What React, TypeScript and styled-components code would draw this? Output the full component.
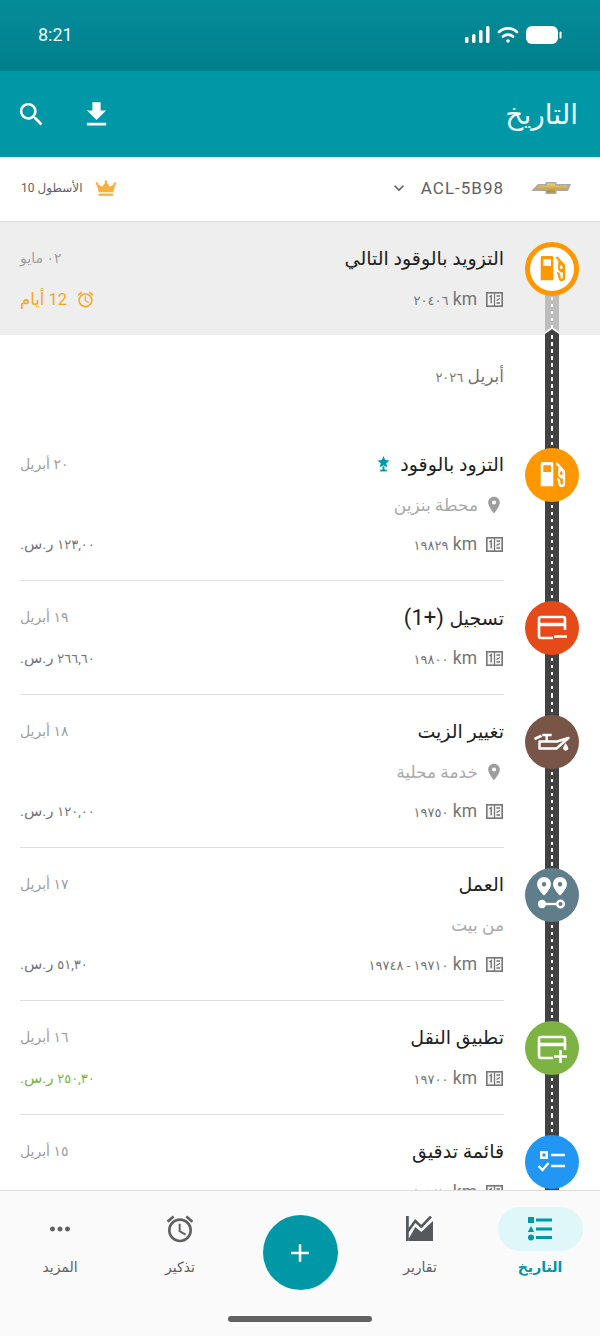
import React from 'react';
import styled, { createGlobalStyle } from 'styled-components';
import {
  MdAdd,
  MdAlarm,
  MdFileDownload,
  MdKeyboardArrowDown,
  MdMoreHoriz,
  MdPlace,
  MdSearch,
} from 'react-icons/md';

const teal = '#0097a7';

const GlobalStyle = createGlobalStyle`
  *, *::before, *::after {
    box-sizing: border-box;
  }
  html, body {
    margin: 0;
    padding: 0;
    background: #fff;
  }
  body {
    font-family: Roboto, "Noto Sans", "DejaVu Sans", sans-serif;
  }
`;

const Screen = styled.div`
  display: flex;
  flex-direction: column;
  width: 600px;
  height: 1336px;
  overflow: hidden;
  direction: rtl;
`;

const StatusBar = styled.div`
  display: flex;
  flex: 0 0 71px;
  align-items: center;
  justify-content: space-between;
  padding: 0 38px 2px;
  color: #eef8f9;
  font-size: 18px;
  background: linear-gradient(#058c99, #007f8c);
  direction: ltr;
`;

const StatusIcons = styled.div`
  display: flex;
  align-items: center;
  gap: 7px;
`;

const AppBar = styled.header`
  display: flex;
  flex: 0 0 86px;
  align-items: center;
  justify-content: space-between;
  padding: 0 22px 0 16px;
  color: #fff;
  background: ${teal};
`;

const AppTitle = styled.h1`
  margin: 0;
  color: #f2fbfc;
  font-size: 28px;
  font-weight: 400;
`;

const AppActions = styled.div`
  display: flex;
  align-items: center;
  gap: 33px;
  direction: ltr;
`;

const VehicleBar = styled.div`
  display: flex;
  flex: 0 0 65px;
  align-items: center;
  justify-content: space-between;
  padding: 0 21px 2px;
  background: #fff;
  border-bottom: 1px solid #dcdcdc;
`;

const VehiclePicker = styled.div`
  display: flex;
  align-items: center;
  padding-right: 7px;
  color: #616161;
  font-size: 17px;
`;

const Plate = styled.span`
  margin: 0 26px 0 12px;
  letter-spacing: 1px;
  direction: ltr;
`;

const Fleet = styled.div`
  display: flex;
  align-items: center;
  gap: 13px;
  color: #616161;
  font-size: 12px;
`;

const List = styled.main`
  flex: 1;
  min-height: 0;
  overflow: hidden;
`;

const Row = styled.section<{ $next?: boolean }>`
  display: flex;
  background: ${(p) => (p.$next ? '#eeeeee' : '#fff')};
`;

const Rail = styled.div`
  position: relative;
  display: flex;
  flex: 0 0 96px;
  justify-content: center;
  padding-top: 20px;
`;

const Road = styled.div<{ $light?: boolean }>`
  position: absolute;
  top: ${(p) => (p.$light ? '47px' : '0')};
  bottom: 0;
  left: 41px;
  width: 14px;
  background: ${(p) => (p.$light ? '#bdbdbd' : '#424242')};

  &::after {
    content: '';
    position: absolute;
    top: 0;
    bottom: 0;
    left: 6px;
    width: 2px;
    background: repeating-linear-gradient(#fff 0 3.5px, transparent 3.5px 7px);
  }
`;

const RoadCap = styled.svg`
  position: absolute;
  top: -8px;
  left: 41px;
  z-index: 1;
`;

const Stop = styled.div<{ $color: string; $outlined?: boolean }>`
  position: relative;
  z-index: 1;
  display: flex;
  align-items: center;
  justify-content: center;
  width: 54px;
  height: 54px;
  color: ${(p) => (p.$outlined ? p.$color : '#fff')};
  background: ${(p) => (p.$outlined ? '#fff' : p.$color)};
  border: ${(p) => (p.$outlined ? `5px solid ${p.$color}` : 'none')};
  border-radius: 50%;
`;

const Body = styled.div<{ $divided?: boolean }>`
  flex: 1;
  min-width: 0;
  margin-left: 20px;
  padding: 23px 0;
  border-bottom: ${(p) => (p.$divided ? '1px solid #dedede' : 'none')};
`;

const TitleLine = styled.div`
  display: flex;
  align-items: center;
  justify-content: space-between;
  height: 26px;
  margin-bottom: 15px;
`;

const Title = styled.div`
  display: flex;
  align-items: center;
  gap: 10px;
  color: #212121;
  font-size: 19px;
`;

const Count = styled.span`
  font-size: 22px;
`;

const DateText = styled.div`
  color: #9e9e9e;
  font-size: 14px;
`;

const MetaLine = styled.div`
  display: flex;
  align-items: center;
  justify-content: space-between;
  height: 26px;
  margin-top: 13px;
`;

const Place = styled.div`
  display: flex;
  align-items: center;
  gap: 6px;
  color: #aaaaaa;
  font-size: 17px;
`;

const Odometer = styled.div`
  display: flex;
  align-items: center;
  gap: 9px;
  padding-right: 1px;
  color: #757575;
  font-size: 17.5px;
`;

const Digits = styled.span`
  font-size: 13px;
  letter-spacing: -0.3px;
`;

const Price = styled.div<{ $income?: boolean }>`
  color: ${(p) => (p.$income ? '#7cb342' : '#757575')};
  font-size: 15px;
`;

const Countdown = styled.div`
  display: flex;
  align-items: center;
  gap: 9px;
  color: #f5a623;
  font-size: 16.5px;
`;

const MonthRow = styled.section`
  display: flex;
  height: 93px;
`;

const MonthLabel = styled.div`
  flex: 1;
  margin-left: 20px;
  padding-top: 31px;
  color: #757575;
  font-size: 17px;
`;

const BottomNav = styled.nav`
  display: flex;
  flex: 0 0 146px;
  flex-direction: column;
  align-items: center;
  background: #fafafa;
  border-top: 1px solid #dddddd;
`;

const NavGrid = styled.div`
  display: grid;
  grid-template-columns: repeat(5, 120px);
  justify-items: center;
  width: 600px;
  height: 125px;
`;

const NavItem = styled.div<{ $active?: boolean }>`
  display: flex;
  flex-direction: column;
  align-items: center;
  padding-top: 16px;
  color: ${(p) => (p.$active ? teal : '#616161')};
  font-size: 14px;
  font-weight: ${(p) => (p.$active ? 700 : 400)};
`;

const NavPill = styled.div<{ $active?: boolean }>`
  display: flex;
  align-items: center;
  justify-content: center;
  width: 85px;
  height: 44px;
  margin-bottom: 8px;
  background: ${(p) => (p.$active ? '#e0f7fa' : 'transparent')};
  border-radius: 22px;
`;

const Fab = styled.div`
  display: flex;
  align-items: center;
  justify-content: center;
  width: 75px;
  height: 75px;
  margin-top: 24px;
  color: #fff;
  background: ${teal};
  border-radius: 50%;
`;

const HomeIndicator = styled.div`
  width: 144px;
  height: 6px;
  background: #616161;
  border-radius: 3px;
`;

const FuelIcon = () => (
  <svg width="30" height="30" viewBox="0 0 30 30" fill="currentColor">
    <path
      fillRule="evenodd"
      d="M5.200 2h9.600a1.500 1.500 0 0 1 1.500 1.500V26.300H3.700V3.500A1.500 1.500 0 0 1 5.200 2zM6.300 5.300V12H14V5.300z"
    />
    <path
      fill="none"
      stroke="currentColor"
      strokeWidth="2.200"
      d="M19.500 3L27 11.500V23.500a2.200 2.200 0 0 1-4.400.3L22 20.500c-.2-1-1-1.500-2-1.500"
    />
    <path
      fillRule="evenodd"
      d="M21.500 6.500l6 6.500v5.500h-2c-2.500 0-4.500-2-4.500-4.500zM24.300 10.500l1.300 2.200a1.500 1.500 0 1 1-2.600 0z"
    />
  </svg>
);

const CardMinusIcon = () => (
  <svg width="32" height="32" viewBox="0 0 32 32" fill="none" stroke="currentColor" strokeWidth="2.600">
    <path d="M17 26H5a2 2 0 0 1-2-2V7a2 2 0 0 1 2-2h22a2 2 0 0 1 2 2v11" />
    <path d="M3 12.500h26" strokeWidth="3.500" />
    <path d="M18 24.500h13" />
  </svg>
);

const CardPlusIcon = () => (
  <svg width="32" height="32" viewBox="0 0 32 32" fill="none" stroke="currentColor" strokeWidth="2.600">
    <path d="M17 26H5a2 2 0 0 1-2-2V7a2 2 0 0 1 2-2h22a2 2 0 0 1 2 2v11" />
    <path d="M3 12.500h26" strokeWidth="3.500" />
    <path d="M18 24.500h13M24.500 18v13" />
  </svg>
);

const OilIcon = () => (
  <svg width="36" height="36" viewBox="0 0 36 36" fill="none" stroke="currentColor" strokeWidth="2.400">
    <path d="M5.500 17.500H23l11.500-3.500L22.500 24.500h-17z" strokeLinejoin="round" />
    <path d="M8.300 11h9.400M12.700 11v6" />
    <path d="M0.500 15l7-3.300" strokeWidth="2.800" />
    <path d="M31.700 19l2.200 3.700a2.600 2.600 0 1 1-4.400 0z" fill="currentColor" stroke="none" />
  </svg>
);

const RouteIcon = () => (
  <svg width="34" height="38" viewBox="0 0 34 38" fill="currentColor">
    <path
      fillRule="evenodd"
      d="M9 1a7 7 0 0 1 7 7c0 5-7 11.500-7 11.500S2 13 2 8a7 7 0 0 1 7-7zm0 5a2.200 2.200 0 1 0 0 4.400A2.200 2.200 0 0 0 9 6z"
    />
    <path
      fillRule="evenodd"
      d="M25 1a7 7 0 0 1 7 7c0 5-7 11.500-7 11.500S18 13 18 8a7 7 0 0 1 7-7zm0 5a2.200 2.200 0 1 0 0 4.400A2.200 2.200 0 0 0 25 6z"
    />
    <circle cx="7" cy="28" r="4.200" />
    <path d="M9 26.800h14v2.400H9z" />
    <circle cx="25.500" cy="28" r="3.300" fill="none" stroke="currentColor" strokeWidth="2.400" />
  </svg>
);

const ChecklistIcon = () => (
  <svg width="30" height="30" viewBox="0 0 30 30" fill="none" stroke="currentColor" strokeWidth="2.400">
    <rect x="3" y="4" width="8" height="8" fill="currentColor" stroke="none" />
    <rect x="5.500" y="6.500" width="3" height="3" fill="#2196f3" stroke="none" />
    <path d="M14 8h14M14 19h14M1.500 19l4 4 6-7" />
  </svg>
);

const OdoIcon = () => (
  <svg width="17" height="15" viewBox="0 0 17 15" fill="#f4f4f4" stroke="#757575">
    <rect x="0.800" y="0.800" width="15.400" height="13.400" strokeWidth="1.600" />
    <path d="M8.500 1v13" strokeWidth="1.200" fill="none" />
    <path d="M3.500 5L5.200 3.700v7.600" strokeWidth="1.400" fill="none" />
    <path d="M10.500 4H14M14 6.500L10.500 8.500M10.500 11H14" strokeWidth="1.400" fill="none" />
  </svg>
);

const StarBadge = () => (
  <svg width="13" height="16" viewBox="0 0 14 17" fill={teal}>
    <path d="M7 0l1.900 4.300 4.600.4-3.500 3 1.100 4.500L7 9.800 2.900 12.200 4 7.700.5 4.700l4.600-.4z" />
    <path d="M3.500 14.500h7V16.500h-7z" />
    <path d="M6 11h2v4H6z" />
  </svg>
);

const Crown = () => (
  <svg width="22" height="17" viewBox="0 0 24 18" fill="#fbb03b">
    <path d="M12 0a1.500 1.500 0 0 1 1 2.600l3.200 4.400 4.300-2.600a1.500 1.500 0 1 1 1.500.8L20 13H4L2 5.200a1.500 1.500 0 1 1 1.500-.8L7.800 7 11 2.600A1.500 1.500 0 0 1 12 0z" />
    <path d="M4 14.500h16V17H4z" />
  </svg>
);

const BowTie = () => (
  <svg width="42" height="14" viewBox="0 0 42 14">
    <defs>
      <linearGradient id="bowtie" x1="0" y1="0" x2="0" y2="1">
        <stop offset="0" stopColor="#ecd27a" />
        <stop offset="1" stopColor="#b08a2e" />
      </linearGradient>
    </defs>
    <path d="M8 3h7.500V1h11v2H41l-3 7H26.500v3h-11v-3H1z" fill="#aaa" />
    <path d="M10 4.500h7V2.500h8v2h12.500l-1.500 4H25v3h-8v-3H4.500z" fill="url(#bowtie)" />
  </svg>
);

const Signal = () => (
  <svg width="25" height="18" viewBox="0 0 25 18" fill="#fff">
    <rect x="0" y="11" width="3.500" height="6" rx="1.500" />
    <rect x="7" y="8" width="3.500" height="9" rx="1.500" />
    <rect x="14" y="4" width="3.500" height="13" rx="1.500" />
    <rect x="21" y="0" width="3.500" height="17" rx="1.500" />
  </svg>
);

const Wifi = () => (
  <svg width="22" height="18" viewBox="0 0 22 18" fill="none" stroke="#fff" strokeWidth="2.600" strokeLinecap="round">
    <path d="M2 6a13 13 0 0 1 18 0" />
    <path d="M6 10.500a7.500 7.500 0 0 1 10 0" />
    <circle cx="11" cy="15" r="1.800" fill="#fff" stroke="none" />
  </svg>
);

const Battery = () => (
  <svg width="36" height="18" viewBox="0 0 36 18" fill="#fff">
    <rect x="0" y="0" width="32" height="18" rx="6" />
    <rect x="33.500" y="5.500" width="2" height="7" rx="1" />
  </svg>
);

const HistoryNavIcon = () => (
  <svg width="26" height="24" viewBox="0 0 26 24" fill={teal}>
    <rect x="1" y="0" width="6" height="6" rx="0.500" />
    <path d="M4 9l3.200 6H.8z" />
    <circle cx="4" cy="20.500" r="3" />
    <rect x="9" y="1.500" width="16" height="3" />
    <rect x="9" y="10.500" width="16" height="3" />
    <rect x="9" y="19" width="16" height="3" />
  </svg>
);

const ReportsNavIcon = () => (
  <svg width="28" height="26" viewBox="0 0 28 26" fill="#55595e">
    <path d="M0 0h2.800v25H0z" />
    <path d="M2.800 25v-2.500L9.300 11l6 5L27 5v20z" />
    <path d="M1.500 15.700L9.300 5l6 5.700L25 0.500" fill="none" stroke="#55595e" strokeWidth="2.600" />
  </svg>
);

type Entry = {
  title: string;
  count?: string;
  date: string;
  km: string;
  price?: string;
  color: string;
  icon: React.ReactNode;
  place?: string;
  note?: string;
  income?: boolean;
  star?: boolean;
};

const entries: Entry[] = [
  {
    title: 'التزود بالوقود',
    date: '٢٠ أبريل',
    place: 'محطة بنزين',
    km: '١٩٨٢٩',
    price: '١٢٣,٠٠',
    color: '#ff9800',
    icon: <FuelIcon />,
    star: true,
  },
  {
    title: 'تسجيل',
    count: '(+1)',
    date: '١٩ أبريل',
    km: '١٩٨٠٠',
    price: '٢٦٦,٦٠',
    color: '#e64a19',
    icon: <CardMinusIcon />,
  },
  {
    title: 'تغيير الزيت',
    date: '١٨ أبريل',
    place: 'خدمة محلية',
    km: '١٩٧٥٠',
    price: '١٢٠,٠٠',
    color: '#795548',
    icon: <OilIcon />,
  },
  {
    title: 'العمل',
    date: '١٧ أبريل',
    note: 'من بيت',
    km: '١٩٧١٠ - ١٩٧٤٨',
    price: '٥١,٣٠',
    color: '#607d8b',
    icon: <RouteIcon />,
  },
  {
    title: 'تطبيق النقل',
    date: '١٦ أبريل',
    km: '١٩٧٠٠',
    price: '٢٥٠,٣٠',
    color: '#7cb342',
    icon: <CardPlusIcon />,
    income: true,
  },
  {
    title: 'قائمة تدقيق',
    date: '١٥ أبريل',
    km: '١٩٦٧٠',
    color: '#2196f3',
    icon: <ChecklistIcon />,
  },
];

const App = (): JSX.Element => (
  <Screen>
    <GlobalStyle />
    <StatusBar>
      <span>8:21</span>
      <StatusIcons>
        <Signal />
        <Wifi />
        <Battery />
      </StatusIcons>
    </StatusBar>

    <AppBar>
      <AppTitle>التاريخ</AppTitle>
      <AppActions>
        <MdSearch size={31} />
        <MdFileDownload size={33} />
      </AppActions>
    </AppBar>

    <VehicleBar>
      <VehiclePicker>
        <BowTie />
        <Plate>ACL-5B98</Plate>
        <MdKeyboardArrowDown size={20} />
      </VehiclePicker>
      <Fleet>
        <Crown />
        <span>الأسطول 10</span>
      </Fleet>
    </VehicleBar>

    <List>
      <Row $next>
        <Rail>
          <Road $light />
          <Stop $color="#ff9800" $outlined>
            <FuelIcon />
          </Stop>
        </Rail>
        <Body>
          <TitleLine>
            <Title>التزويد بالوقود التالي</Title>
            <DateText>٠٢ مايو</DateText>
          </TitleLine>
          <MetaLine>
            <Odometer>
              <OdoIcon />
              <span>
                km <Digits>٢٠٤٠٦</Digits>
              </span>
            </Odometer>
            <Countdown>
              <MdAlarm size={19} />
              <span>12 أيام</span>
            </Countdown>
          </MetaLine>
        </Body>
      </Row>

      <MonthRow>
        <Rail>
          <Road />
          <RoadCap width="14" height="8" viewBox="0 0 14 8">
            <path d="M0 8V5l7-5 7 5v3z" fill="#fff" />
            <path d="M0 8V7l7-5 7 5v1z" fill="#424242" />
          </RoadCap>
        </Rail>
        <MonthLabel>
          أبريل <Digits>٢٠٢٦</Digits>
        </MonthLabel>
      </MonthRow>

      {entries.map((entry, index) => (
        <Row key={entry.title}>
          <Rail>
            <Road />
            <Stop $color={entry.color}>{entry.icon}</Stop>
          </Rail>
          <Body $divided={index < entries.length - 1}>
            <TitleLine>
              <Title>
                <span>
                  {entry.title}
                  {entry.count && <Count> {entry.count}</Count>}
                </span>
                {entry.star && <StarBadge />}
              </Title>
              <DateText>{entry.date}</DateText>
            </TitleLine>
            {entry.place && (
              <MetaLine>
                <Place>
                  <MdPlace size={20} color="#9e9e9e" />
                  <span>{entry.place}</span>
                </Place>
              </MetaLine>
            )}
            {entry.note && (
              <MetaLine>
                <Place>{entry.note}</Place>
              </MetaLine>
            )}
            <MetaLine>
              <Odometer>
                <OdoIcon />
                <span>
                  km <Digits>{entry.km}</Digits>
                </span>
              </Odometer>
              {entry.price && (
                <Price $income={entry.income}>
                  <Digits>{entry.price}</Digits> ر.س.
                </Price>
              )}
            </MetaLine>
          </Body>
        </Row>
      ))}
    </List>

    <BottomNav>
      <NavGrid>
        <NavItem $active>
          <NavPill $active>
            <HistoryNavIcon />
          </NavPill>
          التاريخ
        </NavItem>
        <NavItem>
          <NavPill>
            <ReportsNavIcon />
          </NavPill>
          تقارير
        </NavItem>
        <Fab>
          <MdAdd size={30} />
        </Fab>
        <NavItem>
          <NavPill>
            <MdAlarm size={32} />
          </NavPill>
          تذكير
        </NavItem>
        <NavItem>
          <NavPill>
            <MdMoreHoriz size={30} />
          </NavPill>
          المزيد
        </NavItem>
      </NavGrid>
      <HomeIndicator />
    </BottomNav>
  </Screen>
);

export default App;
